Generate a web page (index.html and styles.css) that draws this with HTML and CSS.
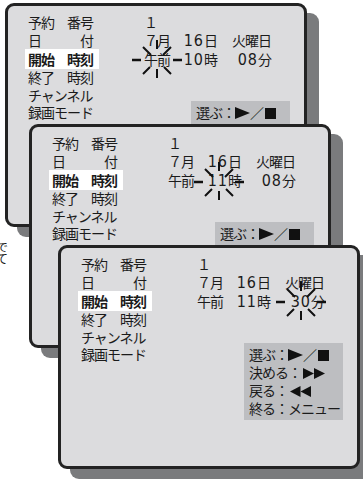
FILE: index.html
```html
<!DOCTYPE html>
<html lang="ja">
<head>
    <meta charset="UTF-8">
    <meta name="viewport" content="width=device-width, initial-scale=1.0">
    <title>予約 開始時刻の設定</title>
    <link rel="stylesheet" href="styles.css">
</head>
<body>
<div class="stage">
    <p class="side">で<br>て</p>

    <!-- 画面1: 午前/午後 -->
    <section class="screen s1">
        <div class="rows">
            <div class="row"><span class="lbl">予約　番号</span><span class="c1">１</span></div>
            <div class="row"><span class="lbl">日　　　付</span><span class="c1">７月</span><span class="c2"><span class="num">16</span>日</span><span class="c3">火曜日</span></div>
            <div class="row on"><span class="lbl">開始　時刻</span><span class="c1">午前</span><span class="c2"><span class="num">10</span>時</span><span class="c3"><span class="num">08</span>分</span></div>
            <div class="row"><span class="lbl">終了　時刻</span></div>
            <div class="row"><span class="lbl">チャンネル</span></div>
            <div class="row"><span class="lbl">録画モード</span></div>
            <div class="help">
                <div>選ぶ：<svg class="ic" width="15" height="12" viewBox="0 0 15 12"><polygon points="0,0 15,6 0,12"/></svg>／<svg class="ic sq" width="11" height="11" viewBox="0 0 11 11"><rect width="11" height="11"/></svg></div>
            </div>
        </div>
        <svg class="burst b1" width="52" height="40" viewBox="0 0 52 40"><path class="dash" d="M1 20H10M42 20H51"/><path d="M26 0V9M26 29V38M12 7L20 15M40 7L32 15M12 34L19 27M40 34L33 27"/></svg>
    </section>

    <!-- 画面2: 時 -->
    <section class="screen s2">
        <div class="rows">
            <div class="row"><span class="lbl">予約　番号</span><span class="c1">１</span></div>
            <div class="row"><span class="lbl">日　　　付</span><span class="c1">７月</span><span class="c2"><span class="num">16</span>日</span><span class="c3">火曜日</span></div>
            <div class="row on"><span class="lbl">開始　時刻</span><span class="c1">午前</span><span class="c2"><span class="num">11</span>時</span><span class="c3"><span class="num">08</span>分</span></div>
            <div class="row"><span class="lbl">終了　時刻</span></div>
            <div class="row"><span class="lbl">チャンネル</span></div>
            <div class="row"><span class="lbl">録画モード</span></div>
            <div class="help">
                <div>選ぶ：<svg class="ic" width="15" height="12" viewBox="0 0 15 12"><polygon points="0,0 15,6 0,12"/></svg>／<svg class="ic sq" width="11" height="11" viewBox="0 0 11 11"><rect width="11" height="11"/></svg></div>
            </div>
        </div>
        <svg class="burst b2" width="52" height="40" viewBox="0 0 52 40"><path class="dash" d="M1 20H10M42 20H51"/><path d="M26 0V9M26 29V38M12 7L20 15M40 7L32 15M12 34L19 27M40 34L33 27"/></svg>
    </section>

    <!-- 画面3: 分 -->
    <section class="screen s3">
        <div class="rows">
            <div class="row"><span class="lbl">予約　番号</span><span class="c1">１</span></div>
            <div class="row"><span class="lbl">日　　　付</span><span class="c1">７月</span><span class="c2"><span class="num">16</span>日</span><span class="c3">火曜日</span></div>
            <div class="row on"><span class="lbl">開始　時刻</span><span class="c1">午前</span><span class="c2"><span class="num">11</span>時</span><span class="c3"><span class="num">30</span>分</span></div>
            <div class="row"><span class="lbl">終了　時刻</span></div>
            <div class="row"><span class="lbl">チャンネル</span></div>
            <div class="row"><span class="lbl">録画モード</span></div>
            <div class="help">
                <div>選ぶ：<svg class="ic" width="15" height="12" viewBox="0 0 15 12"><polygon points="0,0 15,6 0,12"/></svg>／<svg class="ic sq" width="11" height="11" viewBox="0 0 11 11"><rect width="11" height="11"/></svg></div>
                <div>決める：<svg class="ic gap" width="22" height="11" viewBox="0 0 22 11"><polygon points="0,0 11,5.5 0,11"/><polygon points="11,0 22,5.5 11,11"/></svg></div>
                <div>戻る：<svg class="ic gap" width="21" height="11" viewBox="0 0 21 11"><polygon points="10.5,0 0,5.5 10.5,11"/><polygon points="21,0 10.5,5.5 21,11"/></svg></div>
                <div>終る：メニュー</div>
            </div>
        </div>
        <svg class="burst b3" width="52" height="40" viewBox="0 0 52 40"><path class="dash" d="M1 20H10M42 20H51"/><path d="M26 0V9M26 29V38M12 7L20 15M40 7L32 15M12 34L19 27M40 34L33 27"/></svg>
    </section>
</div>
</body>
</html>
```

FILE: styles.css
```css
body {
    margin: 0;
    background: #fff;
    font-family: "Noto Sans CJK JP", sans-serif;
    color: #1b1b1b;
}
.stage {
    position: relative;
    width: 363px;
    height: 479px;
    overflow: hidden;
}
.side {
    position: absolute;
    left: -4px;
    top: 241px;
    margin: 0;
    font-size: 12px;
    line-height: 12px;
}
.screen {
    position: absolute;
    box-sizing: border-box;
    width: 302px;
    height: 224px;
    padding: 8px 0 0 20px;
    background: #dcdcde;
    border: 3px solid #232323;
    border-radius: 9px;
    box-shadow: 12px 10px 0 #7a7b7d;
}
.s1 { left: 5px; top: 3px; }
.s2 { left: 29px; top: 124px; }
.s3 { left: 58px; top: 245px; }

.rows {
    display: grid;
    grid-template-columns: 116px 30px 43px 54px;
    grid-template-rows: 17.5px 17.5px 20px 17.5px 17.5px 17.5px;
    font-size: 14px;
    line-height: 17.5px;
    letter-spacing: -1px;
    white-space: nowrap;
}
.row {
    display: contents;
}
.on > span {
    line-height: 20px;
}
.lbl { grid-column: 1; }
.c1 { grid-column: 2; }
.c2 { grid-column: 3; text-align: right; }
.c3 { grid-column: 4; text-align: right; }
.on .lbl {
    justify-self: start;
    margin-left: -3px;
    padding: 0 6px 0 3px;
    background: #fff;
    font-weight: 700;
}
.num {
    font-family: "Liberation Sans Narrow", "DejaVu Sans Condensed", "Liberation Sans", sans-serif;
    font-size: 16px;
    line-height: 1;
    letter-spacing: 1px;
}
.help {
    grid-column: 3 / 5;
    grid-row: 5 / 7;
    align-self: start;
    justify-self: start;
    box-sizing: border-box;
    width: 99px;
    margin: 14.5px 0 0 17px;
    padding: 2px 0 3px 5px;
    background: #bdbec1;
    line-height: 18px;
}
.ic {
    vertical-align: -1px;
    fill: #111;
}
.ic.sq { margin-left: 2px; }
.ic.gap { margin-left: 2px; }

.burst {
    position: absolute;
    fill: none;
    stroke: #111;
    stroke-width: 2;
}
.burst .dash { stroke-width: 2.6; }
.b1 { left: 123px; top: 34px; }
.b2 { left: 161px; top: 35px; }
.b3 { left: 214px; top: 34px; }
```
